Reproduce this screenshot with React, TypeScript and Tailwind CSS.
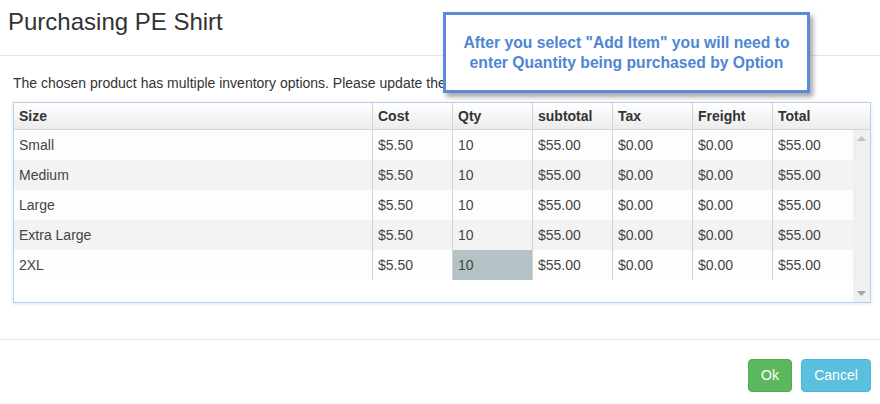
const rows = ["Small", "Medium", "Large", "Extra Large", "2XL"];

const cols = [
  { key: "size", label: "Size", w: "w-[359px] border-r" },
  { key: "cost", label: "Cost", w: "w-[80px] border-r" },
  { key: "qty", label: "Qty", w: "w-[80px] border-r" },
  { key: "subtotal", label: "subtotal", w: "w-[80px] border-r" },
  { key: "tax", label: "Tax", w: "w-[80px] border-r" },
  { key: "freight", label: "Freight", w: "w-[80px] border-r" },
  { key: "total", label: "Total", w: "w-[80px]" },
];

export default function App() {
  return (
    <div className="w-[880px] h-[404px] bg-white text-[#333] font-['Liberation_Sans',Arial,sans-serif] relative overflow-hidden">
      {/* header */}
      <div className="h-[56px] border-b border-[#e5e5e5] px-[8px] pt-[8px]">
        <h1 className="text-[24px] leading-[28px]">Purchasing PE Shirt</h1>
      </div>

      {/* body */}
      <div className="pl-[13px] pr-[9px] pt-[19px] h-[283px]">
        <p className="text-[14px] leading-[17px] mb-[10px]">
          The chosen product has multiple inventory options. Please update the quantities below.
        </p>
        <div className="border border-[#b5d0ea] h-[201px] shadow-[0_1px_3px_rgba(120,160,200,0.25)] flex flex-col">
          <div className="flex h-[27px] border-b border-[#d4d4d4] bg-gradient-to-b from-white to-[#ececec]">
            {cols.map((c) => (
              <div
                key={c.key}
                className={`${c.w} shrink-0 border-[#d4d4d4] px-[5px] text-[14px] font-bold leading-[26px]`}
              >
                {c.label}
              </div>
            ))}
            <div className="flex-1" />
          </div>
          <div className="flex flex-1">
            <div className="flex-1 bg-white">
              {rows.map((r, i) => (
                <div
                  key={r}
                  className={`flex h-[30px] ${i % 2 === 1 ? "bg-[#f3f3f3]" : "bg-[#fdfdfd]"}`}
                >
                  <div className="w-[359px] shrink-0 border-r border-[#d4d4d4] px-[5px] text-[14px] leading-[30px] text-[#444]">{r}</div>
                  <div className="w-[80px] shrink-0 border-r border-[#d4d4d4] px-[5px] text-[14px] leading-[30px] text-[#444]">$5.50</div>
                  <div className={`w-[80px] shrink-0 border-r border-[#d4d4d4] px-[5px] text-[14px] leading-[30px] text-[#444] ${i === 4 ? "bg-[#b3c3c5]" : ""}`}>10</div>
                  <div className="w-[80px] shrink-0 border-r border-[#d4d4d4] px-[5px] text-[14px] leading-[30px] text-[#444]">$55.00</div>
                  <div className="w-[80px] shrink-0 border-r border-[#d4d4d4] px-[5px] text-[14px] leading-[30px] text-[#444]">$0.00</div>
                  <div className="w-[80px] shrink-0 border-r border-[#d4d4d4] px-[5px] text-[14px] leading-[30px] text-[#444]">$0.00</div>
                  <div className="w-[80px] shrink-0 px-[5px] text-[14px] leading-[30px] text-[#444]">$55.00</div>
                </div>
              ))}
            </div>
            <div className="w-[17px] bg-[#f0f0f0] flex flex-col justify-between items-center py-[6px]">
              <svg width="9" height="5" viewBox="0 0 9 5"><path d="M0 5 L4.5 0 L9 5 Z" fill="#c2c2c2" /></svg>
              <svg width="9" height="5" viewBox="0 0 9 5"><path d="M0 0 L4.5 5 L9 0 Z" fill="#a3a3a3" /></svg>
            </div>
          </div>
        </div>
      </div>

      {/* footer */}
      <div className="border-t border-[#e5e5e5] flex justify-end gap-[9px] pt-[19px] pr-[9px]">
        <button className="h-[33px] w-[44px] rounded-[4px] bg-[#5cb85c] border border-[#4cae4c] text-white text-[14px]">Ok</button>
        <button className="h-[33px] w-[70px] rounded-[4px] bg-[#5bc0de] border border-[#46b8da] text-white text-[14px]">Cancel</button>
      </div>

      {/* callout */}
      <div className="absolute left-[443px] top-[12px] w-[367px] h-[81px] border-[3px] border-[#5b8ad6] bg-white shadow-[3px_4px_5px_rgba(0,0,0,0.35)] flex items-center justify-center">
        <p className="text-center text-[15.7px] leading-[20px] font-bold text-[#4e86d4]">
          After you select "Add Item" you will need to
          <br />
          enter Quantity being purchased by Option
        </p>
      </div>
    </div>
  );
}
